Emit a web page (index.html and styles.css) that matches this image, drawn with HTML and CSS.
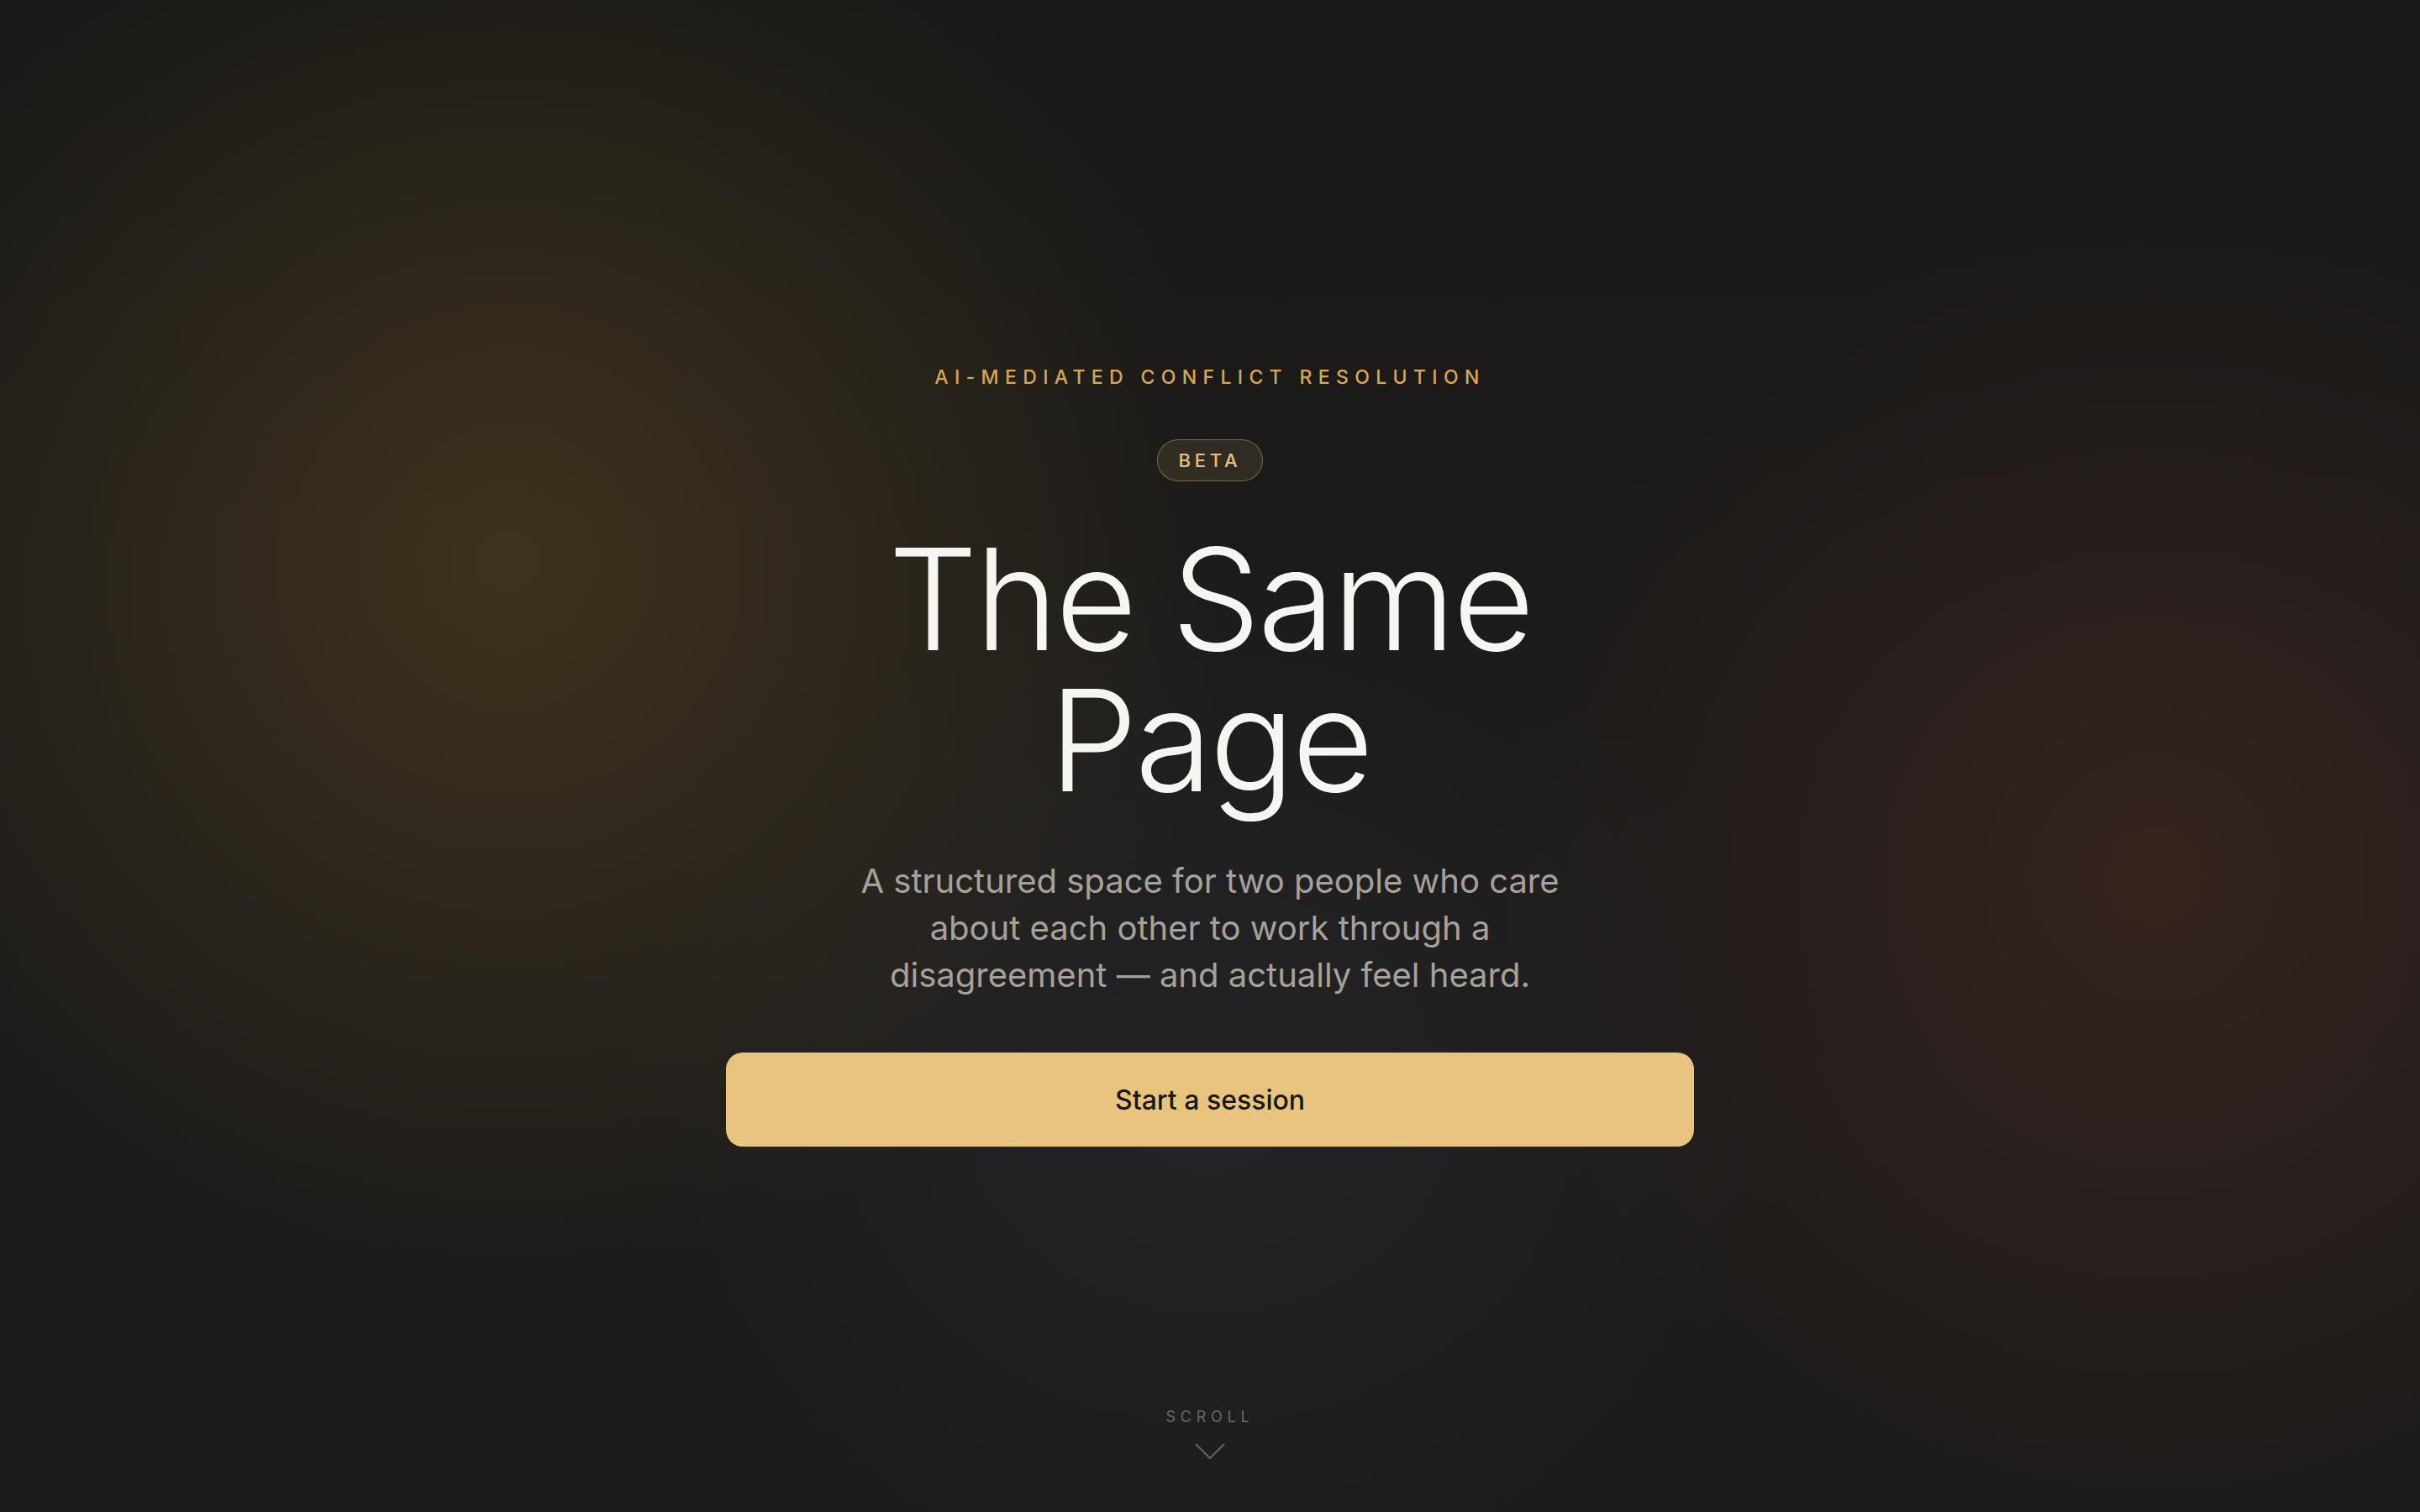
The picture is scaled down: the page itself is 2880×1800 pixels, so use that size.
FILE: index.html
```html
<!DOCTYPE html>
<html lang="en">
  <head>
    <meta charset="UTF-8" />
    <meta name="viewport" content="width=device-width, initial-scale=1.0" />
    <title>The Same Page</title>
    <link rel="stylesheet" href="styles.css">
  </head>
  <body>
    <section class="hero">
      <div class="hero-content">
        <p class="eyebrow">AI-Mediated Conflict Resolution</p>
        <span class="badge">Beta</span>
        <h1 class="title">The Same<br>Page</h1>
        <p class="lead">
          A structured space for two people who care about each other to work
          through a disagreement — and actually feel heard.
        </p>
        <button class="start-button">Start a session</button>
      </div>

      <!-- Petunjuk scroll di bawah -->
      <div class="scroll-cue">
        <span>Scroll</span>
        <svg width="36" height="20" viewBox="0 0 36 20" fill="none">
          <path d="M1 1 L18 18 L35 1" stroke="currentColor" stroke-width="2" />
        </svg>
      </div>
    </section>
  </body>
</html>
```

FILE: styles.css
```css
/* Dasar halaman */
body {
  margin: 0;
  font-family: Inter, "Noto Sans", Arial, sans-serif;
  color: #f5f3ef;
  background-color: #1c1b1a;
}

.hero {
  min-height: 100vh;
  display: grid;
  grid-template-rows: 1fr auto 1fr;
  justify-items: center;
  background:
    radial-gradient(circle at 21% 37%, rgba(92, 70, 32, 0.55) 0, rgba(92, 70, 32, 0.25) 440px, rgba(92, 70, 32, 0) 860px),
    radial-gradient(circle at 89% 58%, rgba(82, 44, 34, 0.48) 0, rgba(82, 44, 34, 0.22) 380px, rgba(82, 44, 34, 0) 780px),
    radial-gradient(ellipse at 50% 72%, rgba(40, 40, 46, 0.6) 0, rgba(40, 40, 46, 0) 700px),
    linear-gradient(to bottom, #181817 0%, #1c1b1a 40%, #1d1c1b 100%);
}

/* baris pertama kosong supaya konten tepat di tengah */
.hero::before {
  content: "";
}

.hero-content {
  width: 1152px;
  display: flex;
  flex-direction: column;
  align-items: center;
  text-align: center;
}

.eyebrow {
  margin: 0;
  font-size: 23px;
  line-height: 28px;
  font-weight: 500;
  letter-spacing: 0.32em;
  text-transform: uppercase;
  color: #d9a654;
}

.badge {
  margin-top: 60px;
  padding: 12px 24px;
  font-size: 22px;
  line-height: 24px;
  font-weight: 500;
  letter-spacing: 0.22em;
  text-transform: uppercase;
  color: #e6c27c;
  border: 1px solid rgba(232, 196, 127, 0.42);
  border-radius: 999px;
  background-color: rgba(232, 196, 127, 0.1);
}

.title {
  margin: 56px 0 0;
  font-size: 168px;
  line-height: 168px;
  font-weight: 300;
  letter-spacing: -0.02em;
  color: #f7f5f1;
}

.lead {
  margin: 56px 0 0;
  max-width: 860px;
  font-size: 40px;
  line-height: 56px;
  color: #a6a19b;
}

.start-button {
  margin-top: 64px;
  width: 100%;
  height: 112px;
  border: none;
  border-radius: 20px;
  background-color: #e8c47f;
  color: #1a1816;
  font-family: inherit;
  font-size: 32px;
  font-weight: 500;
  cursor: pointer;
}

.scroll-cue {
  align-self: end;
  display: flex;
  flex-direction: column;
  align-items: center;
  gap: 20px;
  padding-bottom: 62px;
  color: #65615c;
}

.scroll-cue span {
  font-size: 18px;
  line-height: 22px;
  letter-spacing: 0.32em;
  text-transform: uppercase;
  color: #6b6862;
}
```
